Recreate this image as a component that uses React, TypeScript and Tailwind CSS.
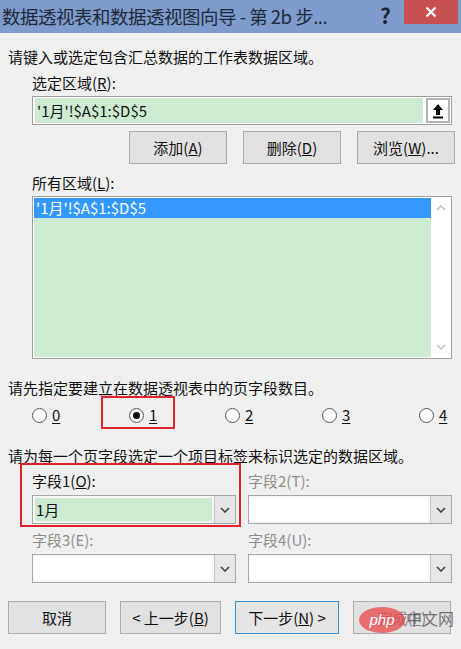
import React from "react";

const font = { fontFamily: '"Microsoft YaHei", "Noto Sans CJK SC", "Noto Sans", sans-serif' };

function Chevron({ up, className }: { up?: boolean; className?: string }) {
  return (
    <svg width="10" height="6" viewBox="0 0 10 6" className={className}>
      <path
        d={up ? "M1 5 L5 1 L9 5" : "M1 1 L5 5 L9 1"}
        fill="none"
        stroke="currentColor"
        strokeWidth="1.6"
      />
    </svg>
  );
}

function Btn({ children, def, disabled }: { children: React.ReactNode; def?: boolean; disabled?: boolean }) {
  return (
    <div
      className={`h-[33px] w-[98px] flex items-center justify-center border text-[15px] ${
        def ? "border-[#3c8fd8] bg-[#e5e5e5]" : "border-[#adadad] bg-[#e1e1e1]"
      } ${disabled ? "text-[#838383]" : "text-[#111]"}`}
    >
      {children}
    </div>
  );
}

function Combo({ value, enabled }: { value?: string; enabled?: boolean }) {
  return (
    <div className="h-[29px] w-[204px] border border-[#a8a8a8] flex bg-[#f7f7f7]">
      <div className={`flex-1 m-[2px] flex items-center pl-[1px] text-[15px] text-[#111] ${enabled ? "bg-[#cdebd1]" : "bg-white"}`}>
        {value}
      </div>
      <div className="w-[21px] border-l border-[#c5c5c5] bg-[#e6e6e6] flex items-center justify-center text-[#444]">
        <Chevron />
      </div>
    </div>
  );
}

function Radio({ label, checked }: { label: string; checked?: boolean }) {
  return (
    <div className="flex items-center gap-[5px]">
      <div className="w-[15px] h-[15px] rounded-full border border-[#555] bg-white flex items-center justify-center">
        {checked && <div className="w-[7px] h-[7px] rounded-full bg-[#111]" />}
      </div>
      <span className="underline text-[15px] text-[#111] underline-offset-2">{label}</span>
    </div>
  );
}

export default function App() {
  return (
    <div className="w-[461px] h-[649px] bg-[#f0f0f0] relative overflow-hidden" style={font}>
      {/* title bar */}
      <div className="h-[33px] bg-[#7f9bcd] flex items-start relative">
        <div className="pl-[2px] pt-[3px] text-[18.5px] leading-[26px] text-[#1e2a3a] whitespace-nowrap tracking-[-0.5px]">
          数据透视表和数据透视图向导 - 第 2b 步...
        </div>
        <div className="absolute left-[380px] top-0 text-[21px] font-bold text-[#1e2635] leading-[30px]">?</div>
        <div className="absolute left-[404px] top-0 w-[54px] h-[24px] bg-[#c75050] flex items-center justify-center">
          <svg width="12" height="12" viewBox="0 0 12 12">
            <path d="M1.5 1.5 L10.5 10.5 M10.5 1.5 L1.5 10.5" stroke="white" strokeWidth="2.2" />
          </svg>
        </div>
      </div>

      <div className="text-[15px] text-[#111] leading-[20px]">
        <div className="pl-[8px] pt-[14px]">请键入或选定包含汇总数据的工作表数据区域。</div>
        <div className="pl-[32px] pt-[6px]">
          选定区域(<span className="underline">R</span>):
        </div>
        {/* input */}
        <div className="ml-[32px] mt-[3px] w-[420px] h-[29px] border border-[#a0a0a0] bg-white flex items-center">
          <div className="ml-[2px] w-[388px] h-[25px] bg-[#cdebd1] flex items-center pl-[2px]">'1月'!$A$1:$D$5</div>
          <div className="ml-[3px] w-[24px] h-[25px] border-2 border-[#b4b4b4] bg-white flex items-center justify-center">
            <svg width="12" height="16" viewBox="0 0 12 16">
              <path d="M6 1 L11 7 L8 7 L8 12 L4 12 L4 7 L1 7 Z" fill="#000" />
              <rect x="1" y="13.5" width="10" height="2" fill="#000" />
            </svg>
          </div>
        </div>
        {/* buttons */}
        <div className="flex gap-[16px] ml-[129px] mt-[6px]">
          <Btn>
            添加(<span className="underline">A</span>)
          </Btn>
          <Btn>
            删除(<span className="underline">D</span>)
          </Btn>
          <Btn>
            浏览(<span className="underline">W</span>)...
          </Btn>
        </div>
        <div className="pl-[32px] pt-[9px]">
          所有区域(<span className="underline">L</span>):
        </div>
        {/* listbox */}
        <div className="ml-[32px] mt-[3px] w-[420px] h-[163px] border border-[#a0a0a0] bg-white flex">
          <div className="ml-[1px] mt-[1px] mb-[1px] w-[397px] bg-[#cdebd1]">
            <div className="h-[20px] bg-[#3399ff] text-white pl-[2px] leading-[20px]">'1月'!$A$1:$D$5</div>
          </div>
          <div className="flex-1 flex flex-col items-center justify-between py-[8px] text-[#c4c4c4]">
            <Chevron up />
            <Chevron />
          </div>
        </div>

        <div className="pl-[8px] pt-[19px]">请先指定要建立在数据透视表中的页字段数目。</div>
        <div className="ml-[32px] mt-[5px] grid grid-cols-[97px_96px_97px_97px_40px] h-[24px] items-center relative">
          <Radio label="0" />
          <Radio label="1" checked />
          <Radio label="2" />
          <Radio label="3" />
          <Radio label="4" />
          <div className="absolute left-[69px] top-[-7px] w-[74px] h-[33px] border-2 border-[#e0242a]" />
        </div>

        <div className="pl-[8px] pt-[19px]">请为每一个页字段选定一个项目标签来标识选定的数据区域。</div>
        <div className="ml-[32px] mt-[5px] grid grid-cols-[204px_204px] gap-x-[12px] relative">
          <div>
            字段1(<span className="underline">O</span>):
          </div>
          <div className="text-[#8d8d8d]">字段2(T):</div>
          <div className="mt-[4px]">
            <Combo value="1月" enabled />
          </div>
          <div className="mt-[4px]">
            <Combo />
          </div>
          <div className="text-[#8d8d8d] mt-[6px]">字段3(E):</div>
          <div className="text-[#8d8d8d] mt-[6px]">字段4(U):</div>
          <div className="mt-[4px]">
            <Combo />
          </div>
          <div className="mt-[4px]">
            <Combo />
          </div>
          <div className="absolute left-[-12px] top-[-8px] w-[221px] h-[64px] border-2 border-[#e0242a]" />
        </div>

        {/* bottom buttons */}
        <div className="flex ml-[8px] mt-[18px] gap-[14px]">
          <Btn>取消</Btn>
          <div className="h-[33px] w-[101px] flex items-center justify-center border border-[#adadad] bg-[#e1e1e1] text-[15px]">
            &lt; 上一步(<span className="underline">B</span>)
          </div>
          <div className="h-[33px] w-[104px] flex items-center justify-center border border-[#3c8fd8] bg-[#e5e5e5] text-[15px]">
            下一步(<span className="underline">N</span>) &gt;
          </div>
          <Btn disabled>
            完成(<span className="underline">F</span>)
          </Btn>
        </div>
      </div>

      {/* watermark */}
      <div className="absolute left-[359px] top-[607px] flex items-center pointer-events-none">
        <div className="w-[46px] h-[26px] rounded-[50%] bg-[#e8484a]/75 flex items-center justify-center text-white text-[15px] italic" style={{ fontFamily: '"Liberation Sans", sans-serif' }}>
          php
        </div>
        <div className="text-[16px] text-[#555]/80 ml-[1px] -mt-[4px]">中文网</div>
      </div>
    </div>
  );
}
